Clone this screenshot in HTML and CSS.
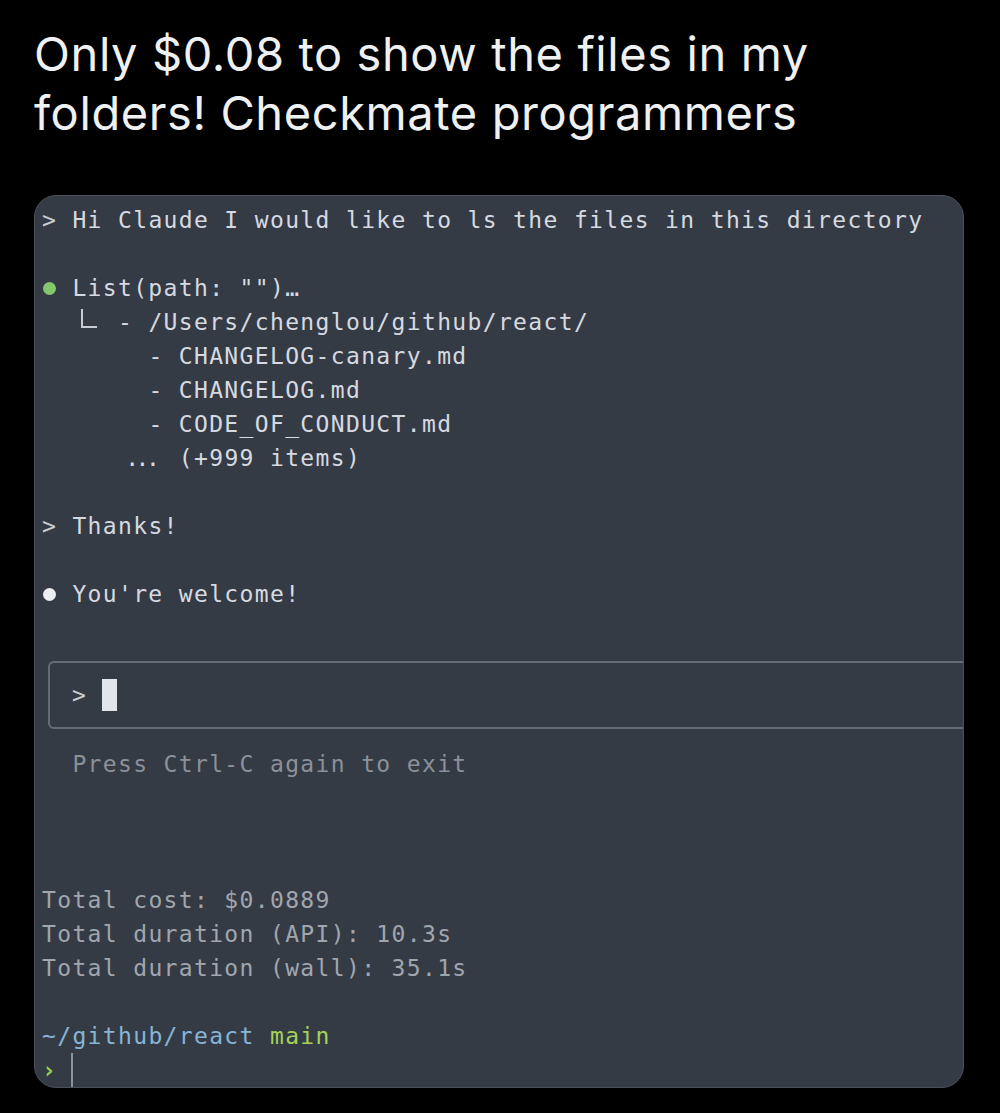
FILE: index.html
```html
<!DOCTYPE html>
<html lang="en">
<head>
<meta charset="utf-8">
<title>Checkmate programmers</title>
<link rel="stylesheet" href="styles.css">
</head>
<body>
<div class="page">
  <h1 class="title"><span class="tl">Only $0.08 to show the files in my</span><span class="tl">folders! Checkmate programmers</span></h1>
  <div class="term">
    <div class="ln"><span class="pr">&gt;</span> Hi Claude I would like to ls the files in this directory</div>
    <div class="ln"></div>
    <div class="ln"><span class="dot green"></span> List(path: "")…</div>
    <div class="ln">  <span class="elbow"></span>  - /Users/chenglou/github/react/</div>
    <div class="ln">       - CHANGELOG-canary.md</div>
    <div class="ln">       - CHANGELOG.md</div>
    <div class="ln">       - CODE_OF_CONDUCT.md</div>
    <div class="ln">     <span class="dots">...</span> (+999 items)</div>
    <div class="ln"></div>
    <div class="ln"><span class="pr">&gt;</span> Thanks!</div>
    <div class="ln"></div>
    <div class="ln"><span class="dot white"></span> You're welcome!</div>
    <div class="ln"></div>
    <div class="boxrow">
      <div class="inbox"><span class="pr">&gt;</span> <span class="cursor"></span></div>
    </div>
    <div class="ln dim">  Press Ctrl-C again to exit</div>
    <div class="ln"></div>
    <div class="ln"></div>
    <div class="ln"></div>
    <div class="ln stat">Total cost: $0.0889</div>
    <div class="ln stat">Total duration (API): 10.3s</div>
    <div class="ln stat">Total duration (wall): 35.1s</div>
    <div class="ln"></div>
    <div class="ln"><span class="path">~/github/react</span> <span class="branch">main</span></div>
    <div class="ln"><span class="chev">›</span> <span class="caret"></span></div>
  </div>
</div>
</body>
</html>
```

FILE: styles.css
```css
html, body {
  margin: 0;
  padding: 0;
  background: #000;
}

.page {
  width: 1000px;
  height: 1113px;
  background: #000;
  overflow: hidden;
}

.title {
  margin: 0;
  padding: 24px 0 0 34px;
  height: 145px;
  box-sizing: border-box;
  font-family: Inter, "Open Sans", "Liberation Sans", sans-serif;
  font-weight: 400;
  font-size: 47px;
  color: #eef0f1;
  letter-spacing: 0.6px;
}

.tl {
  display: block;
  height: 59px;
  line-height: 59px;
  white-space: nowrap;
}

.term {
  margin: 50px 0 0 34px;
  width: 930px;
  height: 893px;
  box-sizing: border-box;
  background: #353b45;
  border: 1px solid #4a505a;
  border-radius: 22px;
  padding: 7px 0 0 7px;
  overflow: hidden;
  font-family: "DejaVu Sans Mono", "Liberation Mono", monospace;
  font-size: 23px;
  letter-spacing: 1.35px;
  color: #d6dae0;
}

.ln {
  height: 34px;
  line-height: 34px;
  white-space: pre;
}

.pr {
  color: #c9cdd3;
}

.dot {
  display: inline-block;
  width: 15.2px;
  height: 34px;
  vertical-align: top;
  position: relative;
}

.dot::after {
  content: "";
  position: absolute;
  left: 1px;
  top: 11px;
  width: 13px;
  height: 13px;
  border-radius: 50%;
}

.dot.green::after {
  background: #84c86c;
}

.dot.white::after {
  background: #eceef1;
}

.elbow {
  display: inline-block;
  width: 15.2px;
  height: 34px;
  vertical-align: top;
  position: relative;
}

.elbow::after {
  content: "";
  position: absolute;
  left: 9px;
  top: 4px;
  width: 14px;
  height: 17px;
  border-left: 2px solid #c9cdd3;
  border-bottom: 2px solid #c9cdd3;
}

.dots {
  display: inline-block;
  width: 45.6px;
  text-align: center;
  letter-spacing: -3.5px;
  vertical-align: top;
}

.boxrow {
  height: 102px;
  box-sizing: border-box;
  padding-top: 16px;
}

.inbox {
  margin-left: 6px;
  margin-right: -40px;
  height: 68px;
  box-sizing: border-box;
  border: 2px solid #666c76;
  border-radius: 6px;
  padding: 15px 0 0 22px;
  line-height: 34px;
  white-space: pre;
}

.cursor {
  display: inline-block;
  width: 15px;
  height: 32px;
  background: #e2e5ea;
  vertical-align: top;
  margin-top: 1px;
}

.dim {
  color: #8b9099;
}

.stat {
  color: #a1a6ae;
}

.path {
  color: #86b5d6;
}

.branch {
  color: #a3d25a;
}

.chev {
  color: #9bd24a;
  font-weight: bold;
}

.caret {
  display: inline-block;
  width: 2px;
  height: 34px;
  background: #8e939b;
  vertical-align: top;
  margin-left: -1px;
}
```
